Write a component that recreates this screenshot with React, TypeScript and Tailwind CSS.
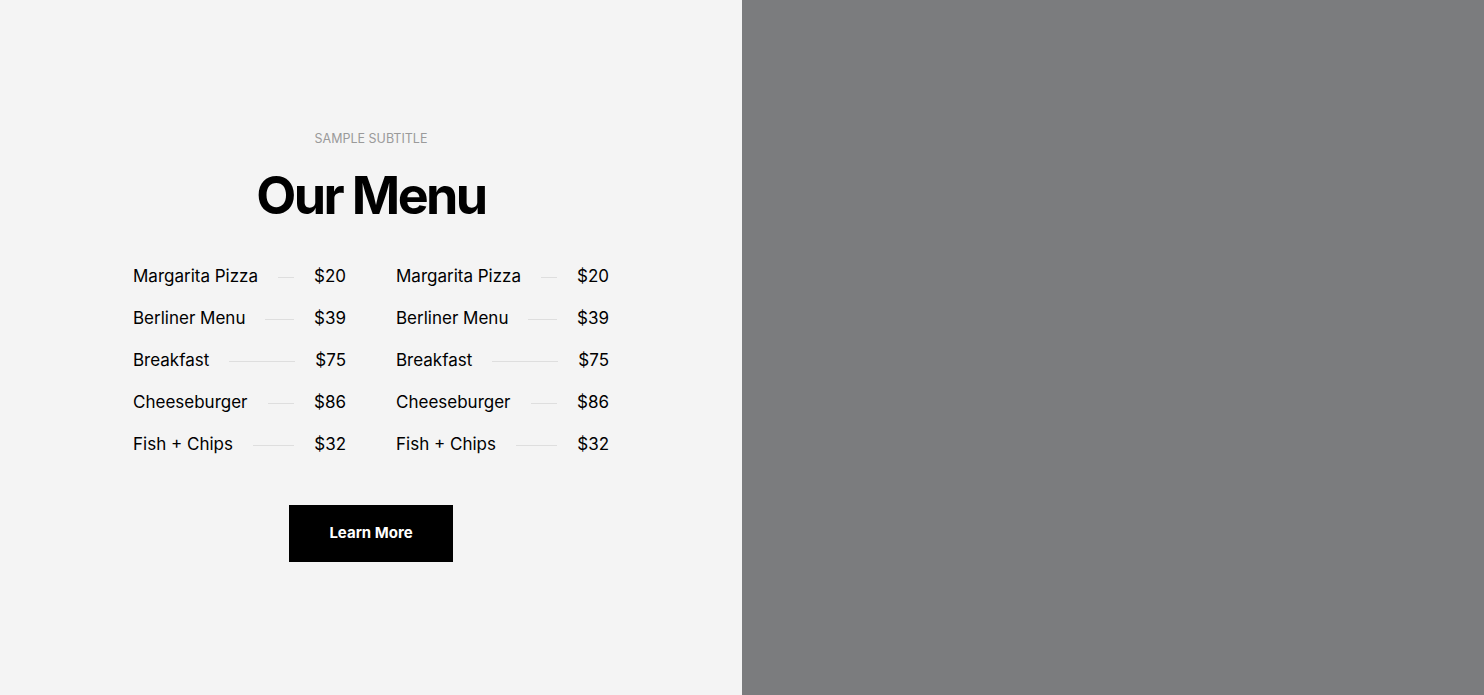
import React from 'react';

const items = [
  { name: 'Margarita Pizza', price: '$20' },
  { name: 'Berliner Menu', price: '$39' },
  { name: 'Breakfast', price: '$75' },
  { name: 'Cheeseburger', price: '$86' },
  { name: 'Fish + Chips', price: '$32' },
];

function MenuColumn() {
  return (
    <div className="flex flex-col">
      {items.map((item) => (
        <div key={item.name} className="flex h-[42px] items-center">
          <span className="text-[17px] text-black whitespace-nowrap">{item.name}</span>
          <span className="mx-5 h-px flex-1 bg-[#dedede]" />
          <span className="text-[17px] text-black">{item.price}</span>
        </div>
      ))}
    </div>
  );
}

export default function App() {
  return (
    <div
      className="flex h-screen w-full"
      style={{ fontFamily: 'Inter, "Noto Sans", sans-serif' }}
    >
      <div className="flex w-[742px] flex-col items-center justify-center bg-[#f4f4f4] pb-[2px]">
        <p className="text-[12.5px] leading-[16px] uppercase text-[#9a9a9a]">Sample Subtitle</p>
        <h1 className="mt-[19px] text-[52px] leading-[60px] font-bold tracking-[-0.05em] text-black">
          Our Menu
        </h1>
        <div className="mt-[30px] grid grid-cols-[213px_213px] gap-x-[50px]">
          <MenuColumn />
          <MenuColumn />
        </div>
        <button className="mt-[39px] h-[57px] w-[164px] bg-black text-[15px] font-bold text-white">
          Learn More
        </button>
      </div>
      <div className="flex-1 bg-[#7b7c7e]" />
    </div>
  );
}
